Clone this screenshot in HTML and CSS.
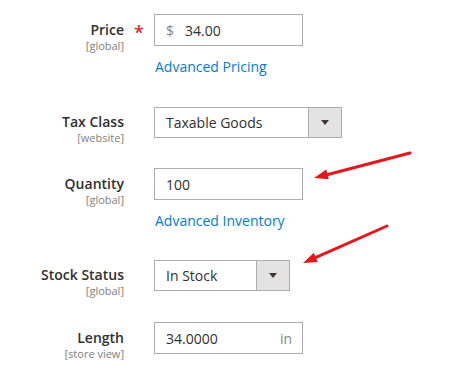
FILE: index.html
```html
<!DOCTYPE html>
<html lang="en">
<head>
    <meta charset="UTF-8">
    <meta name="viewport" content="width=device-width, initial-scale=1.0">
    <title>Product Form</title>
    <link rel="stylesheet" href="styles.css">
</head>
<body>
    <div class="form">
        <div class="field field-price">
            <div class="label">
                <span class="title">Price</span>
                <span class="scope">[global]</span>
            </div>
            <div class="mark"><span class="required">*</span></div>
            <div class="control">
                <div class="input input-wide">
                    <span class="addon">$</span>
                    <span class="value">34.00</span>
                </div>
                <a class="link" href="#">Advanced Pricing</a>
            </div>
        </div>

        <div class="field field-tax">
            <div class="label">
                <span class="title">Tax Class</span>
                <span class="scope">[website]</span>
            </div>
            <div class="mark"></div>
            <div class="control">
                <div class="select select-wide">
                    <span class="value">Taxable Goods</span>
                    <span class="select-btn"><span class="caret"></span></span>
                </div>
            </div>
        </div>

        <div class="field field-qty">
            <div class="label">
                <span class="title">Quantity</span>
                <span class="scope">[global]</span>
            </div>
            <div class="mark"></div>
            <div class="control">
                <div class="input input-wide">
                    <span class="value">100</span>
                </div>
                <a class="link" href="#">Advanced Inventory</a>
            </div>
        </div>

        <div class="field field-stock">
            <div class="label">
                <span class="title">Stock Status</span>
                <span class="scope">[global]</span>
            </div>
            <div class="mark"></div>
            <div class="control">
                <div class="select select-narrow">
                    <span class="value">In Stock</span>
                    <span class="select-btn"><span class="caret"></span></span>
                </div>
            </div>
        </div>

        <div class="field field-length">
            <div class="label">
                <span class="title">Length</span>
                <span class="scope">[store view]</span>
            </div>
            <div class="mark"></div>
            <div class="control">
                <div class="input input-wide">
                    <span class="value">34.0000</span>
                    <span class="unit">in</span>
                </div>
            </div>
        </div>
    </div>

    <svg class="arrows" width="470" height="368" viewBox="0 0 470 368">
        <line x1="410" y1="153" x2="328" y2="174.5" stroke="#e5161c" stroke-width="3" stroke-linecap="round"/>
        <polygon points="314,178 328.8,179.3 326.3,169.6" fill="#e5161c"/>
        <line x1="387" y1="226" x2="316" y2="257.4" stroke="#e5161c" stroke-width="3" stroke-linecap="round"/>
        <polygon points="303,263 317.8,262 313.8,252.8" fill="#e5161c"/>
    </svg>
</body>
</html>
```

FILE: styles.css
```css
body {
    margin: 0;
    background: #ffffff;
    font-family: "Open Sans", "Liberation Sans", sans-serif;
    color: #303030;
    position: relative;
    width: 470px;
    height: 368px;
    overflow: hidden;
}
.form {
    padding-top: 14px;
}
.field {
    display: flex;
    align-items: flex-start;
}
.field-tax { margin-top: 30px; }
.field-qty { margin-top: 30px; }
.field-stock { margin-top: 29px; }
.field-length { margin-top: 31px; }
.label {
    width: 124px;
    text-align: right;
    padding-top: 7px;
    margin-bottom: -10px;
    display: flex;
    flex-direction: column;
}
.field-tax .label,
.field-stock .label {
    padding-top: 6px;
}
.title {
    font-size: 14px;
    font-weight: 600;
    line-height: 18px;
    color: #303030;
}
.scope {
    font-size: 11px;
    line-height: 13px;
    color: #808080;
}
.mark {
    width: 30px;
    text-align: center;
    padding-top: 8px;
}
.required {
    color: #e22626;
    font-size: 18px;
    line-height: 18px;
    font-weight: 600;
}
.control {
    display: flex;
    flex-direction: column;
    align-items: flex-start;
}
.input {
    box-sizing: border-box;
    height: 32px;
    border: 1px solid #adadad;
    display: flex;
    align-items: center;
    padding: 0 10px 0 11px;
    font-size: 14px;
}
.input-wide { width: 149px; }
.addon {
    color: #858585;
    margin-right: 11px;
}
.unit {
    margin-left: auto;
    color: #858585;
}
.link {
    margin-top: 11px;
    margin-left: 1px;
    line-height: 20px;
    font-size: 14px;
    color: #007bdb;
    text-decoration: none;
}
.select {
    box-sizing: border-box;
    height: 31px;
    border: 1px solid #adadad;
    display: flex;
    align-items: stretch;
    font-size: 14px;
}
.select-wide { width: 188px; }
.select-narrow { width: 136px; }
.select .value {
    flex: 1;
    display: flex;
    align-items: center;
    padding-left: 11px;
}
.select-btn {
    width: 32px;
    background: #e3e3e3;
    border-left: 1px solid #adadad;
    display: flex;
    align-items: center;
    justify-content: center;
}
.caret {
    width: 0;
    height: 0;
    border-left: 4px solid transparent;
    border-right: 4px solid transparent;
    border-top: 5px solid #41362f;
}
.arrows {
    position: absolute;
    left: 0;
    top: 0;
    pointer-events: none;
}
```
